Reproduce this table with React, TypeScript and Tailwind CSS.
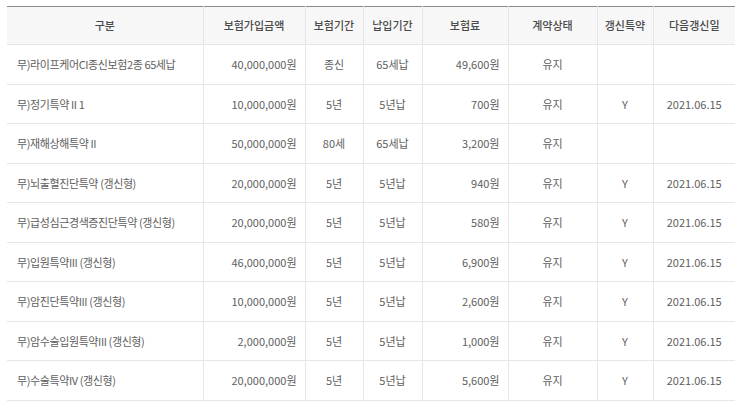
import React from 'react';

interface Row {
  name: string;
  amount: string;
  period: string;
  payment: string;
  premium: string;
  status: string;
  renew: string;
  nextDate: string;
}

const rows: Row[] = [
  { name: '무)라이프케어CI종신보험2종 65세납', amount: '40,000,000원', period: '종신', payment: '65세납', premium: '49,600원', status: '유지', renew: '', nextDate: '' },
  { name: '무)정기특약 II 1', amount: '10,000,000원', period: '5년', payment: '5년납', premium: '700원', status: '유지', renew: 'Y', nextDate: '2021.06.15' },
  { name: '무)재해상해특약 II', amount: '50,000,000원', period: '80세', payment: '65세납', premium: '3,200원', status: '유지', renew: '', nextDate: '' },
  { name: '무)뇌출혈진단특약 (갱신형)', amount: '20,000,000원', period: '5년', payment: '5년납', premium: '940원', status: '유지', renew: 'Y', nextDate: '2021.06.15' },
  { name: '무)급성심근경색증진단특약 (갱신형)', amount: '20,000,000원', period: '5년', payment: '5년납', premium: '580원', status: '유지', renew: 'Y', nextDate: '2021.06.15' },
  { name: '무)입원특약III (갱신형)', amount: '46,000,000원', period: '5년', payment: '5년납', premium: '6,900원', status: '유지', renew: 'Y', nextDate: '2021.06.15' },
  { name: '무)암진단특약III (갱신형)', amount: '10,000,000원', period: '5년', payment: '5년납', premium: '2,600원', status: '유지', renew: 'Y', nextDate: '2021.06.15' },
  { name: '무)암수술입원특약III (갱신형)', amount: '2,000,000원', period: '5년', payment: '5년납', premium: '1,000원', status: '유지', renew: 'Y', nextDate: '2021.06.15' },
  { name: '무)수술특약IV (갱신형)', amount: '20,000,000원', period: '5년', payment: '5년납', premium: '5,600원', status: '유지', renew: 'Y', nextDate: '2021.06.15' },
];

const headers = ['구분', '보험가입금액', '보험기간', '납입기간', '보험료', '계약상태', '갱신특약', '다음갱신일'];
const widths = ['w-[196px]', 'w-[102px]', 'w-[58px]', 'w-[59px]', 'w-[86px]', 'w-[89px]', 'w-[56px]', 'w-[82px]'];

const cell = 'h-[39.5px] border-b border-[#e6e6e6] border-l first:border-l-0';

export default function App() {
  return (
    <div className="w-[743px] h-[407px] bg-white pt-[6px] pl-[7px] font-['Noto_Sans_CJK_KR','Noto_Sans',sans-serif] text-[11px] text-[#5e5e5e]">
      <table className="w-[728px] table-fixed border-collapse border-t border-t-[#8a8a8a]">
        <colgroup>
          {widths.map((w, i) => (
            <col key={i} className={w} />
          ))}
        </colgroup>
        <thead>
          <tr className="bg-[#f7f7f7]">
            {headers.map((h) => (
              <th key={h} className="h-[38px] border-b border-[#e6e6e6] border-l border-l-[#e6e6e6] first:border-l-0 font-medium text-[#4a4a4a] text-center">
                {h}
              </th>
            ))}
          </tr>
        </thead>
        <tbody>
          {rows.map((r) => (
            <tr key={r.name}>
              <td className={`${cell} pl-[10px] text-left whitespace-nowrap tracking-[-0.4px]`}>{r.name}</td>
              <td className={`${cell} pr-[8px] text-right`}>{r.amount}</td>
              <td className={`${cell} text-center`}>{r.period}</td>
              <td className={`${cell} text-center`}>{r.payment}</td>
              <td className={`${cell} pr-[8px] text-right`}>{r.premium}</td>
              <td className={`${cell} text-center`}>{r.status}</td>
              <td className={`${cell} text-center`}>{r.renew}</td>
              <td className={`${cell} text-center`}>{r.nextDate}</td>
            </tr>
          ))}
        </tbody>
      </table>
    </div>
  );
}
